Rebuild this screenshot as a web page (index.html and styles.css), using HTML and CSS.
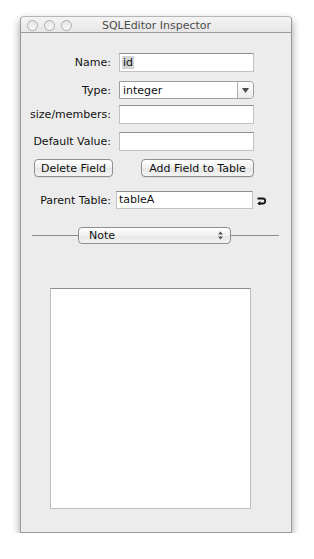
FILE: index.html
```html
<!DOCTYPE html>
<html>
<head>
<meta charset="utf-8">
<link rel="stylesheet" href="styles.css">
</head>
<body>
<div class="window">
  <div class="titlebar">
    <div class="lights">
      <span class="light"></span><span class="light"></span><span class="light"></span>
    </div>
    <div class="title">SQLEditor Inspector</div>
  </div>
  <div class="content">
    <div class="row r-name">
      <label class="lbl">Name:</label>
      <div class="field"><span class="sel">id</span></div>
    </div>
    <div class="row r-type">
      <label class="lbl">Type:</label>
      <div class="combo">
        <span class="combo-text">integer</span>
        <span class="combo-btn"><svg width="7" height="5" viewBox="0 0 7 5"><path d="M0 0H7L3.5 5Z" fill="#4a4a4a"/></svg></span>
      </div>
    </div>
    <div class="row r-size">
      <label class="lbl">size/members:</label>
      <div class="field"></div>
    </div>
    <div class="row r-def">
      <label class="lbl">Default Value:</label>
      <div class="field"></div>
    </div>
    <div class="btnrow">
      <button class="btn btn-del">Delete Field</button>
      <button class="btn btn-add">Add Field to Table</button>
    </div>
    <div class="row r-parent">
      <label class="lbl">Parent Table:</label>
      <div class="field field-parent">tableA</div>
      <svg class="goto" width="9" height="8" viewBox="0 0 9 8"><path d="M0.5 1.5H5.8A2.5 2.5 0 0 1 5.8 6.5H3" fill="none" stroke="#111" stroke-width="1.8"/><path d="M0.3 6.5L3.4 3.9V9.1Z" fill="#111"/></svg>
    </div>
    <div class="sep">
      <span class="line"></span>
      <div class="popup">
        <span>Note</span>
        <svg width="5" height="9" viewBox="0 0 5 9"><path d="M0 3.5L2.5 0.5L5 3.5Z M0 5.5L2.5 8.5L5 5.5Z" fill="#555"/></svg>
      </div>
      <span class="line"></span>
    </div>
    <div class="notebox"></div>
  </div>
</div>
</body>
</html>
```
FILE: styles.css
```css
html, body {
  margin: 0;
  padding: 0;
  background: #ffffff;
}
body {
  font-family: "DejaVu Sans", sans-serif;
  font-size: 11px;
  color: #111;
}
.window {
  margin: 16px 0 0 20px;
  width: 270px;
  height: 515px;
  border: 1px solid #9a9a9a;
  border-top-color: #b5b5b5;
  border-radius: 4px 4px 0 0;
  background: #ececec;
  box-shadow: 0 4px 8px rgba(0,0,0,0.4);
  display: flex;
  flex-direction: column;
}
.titlebar {
  height: 15px;
  border-bottom: 1px solid #9c9c9c;
  background: linear-gradient(#f4f4f4, #e6e6e6);
  border-radius: 4px 4px 0 0;
  display: flex;
  align-items: center;
}
.lights {
  display: flex;
  gap: 6px;
  margin-left: 6px;
  margin-top: 1px;
}
.light {
  width: 9px;
  height: 9px;
  border-radius: 50%;
  border: 1px solid #acacac;
  background: linear-gradient(#e6e6e6, #f7f7f7);
}
.title {
  flex: 1;
  text-align: center;
  color: #4d4d4d;
  font-size: 11px;
  margin-right: 50px;
  margin-top: 1px;
}
.content {
  display: flex;
  flex-direction: column;
}
.row {
  display: flex;
  align-items: center;
  height: 19px;
}
.lbl {
  width: 90px;
  text-align: right;
  margin-right: 8px;
  white-space: nowrap;
}
.field {
  height: 17px;
  background: #fff;
  border: 1px solid #c2c2c2;
  border-top-color: #8e8e8e;
  line-height: 17px;
  padding-left: 2px;
  width: 131px;
}
.sel {
  background: #d4d4d4;
  padding: 0 1px;
}
.r-name { margin-top: 20px; }
.r-type { margin-top: 9px; height: 18px; }
.r-size { margin-top: 6px; }
.r-def { margin-top: 8px; }
.combo {
  width: 133px;
  height: 16px;
  border: 1px solid #9e9e9e;
  border-radius: 0 4px 4px 0;
  background: #fff;
  display: flex;
  align-items: center;
}
.combo-text {
  flex: 1;
  padding-left: 3px;
}
.combo-btn {
  width: 15px;
  height: 16px;
  border-left: 1px solid #b0b0b0;
  display: flex;
  align-items: center;
  justify-content: center;
  background: linear-gradient(#ffffff, #ececec);
  border-radius: 0 4px 4px 0;
}
.btnrow {
  display: flex;
  margin-top: 8px;
  padding-left: 13px;
  height: 18px;
}
.btn {
  font-family: "DejaVu Sans", sans-serif;
  font-size: 11px;
  color: #111;
  height: 18px;
  padding: 0;
  border: 1px solid #8f8f8f;
  border-radius: 4px;
  background: linear-gradient(#ffffff, #f0f0f0 50%, #e6e6e6 51%, #f4f4f4);
  box-shadow: 0 1px 0 rgba(0,0,0,0.08);
}
.btn-del { width: 79px; }
.btn-add { width: 113px; margin-left: 28px; }
.r-parent {
  margin-top: 14px;
  height: 18px;
}
.r-parent .lbl { margin-right: 5px; }
.field-parent {
  height: 16px;
  line-height: 16px;
  width: 133px;
  padding-left: 2px;
}
.goto { margin-left: 4px; margin-top: 1px; }
.sep {
  display: flex;
  align-items: center;
  margin-top: 18px;
  padding-left: 11px;
  height: 17px;
}
.line {
  height: 1px;
  background: #8a8a8a;
}
.sep .line:first-child { width: 46px; }
.sep .line:last-child { width: 48px; }
.popup {
  width: 134px;
  height: 15px;
  border: 1px solid #8f8f8f;
  border-radius: 4px;
  background: linear-gradient(#ffffff, #f0f0f0 50%, #e6e6e6 51%, #f4f4f4);
  display: flex;
  align-items: center;
  justify-content: space-between;
  padding: 0 7px 0 10px;
  font-size: 11px;
}
.notebox {
  margin: 44px 0 0 29px;
  width: 199px;
  height: 219px;
  background: #fff;
  border: 1px solid #bdbdbd;
  border-top-color: #8c8c8c;
}
```
